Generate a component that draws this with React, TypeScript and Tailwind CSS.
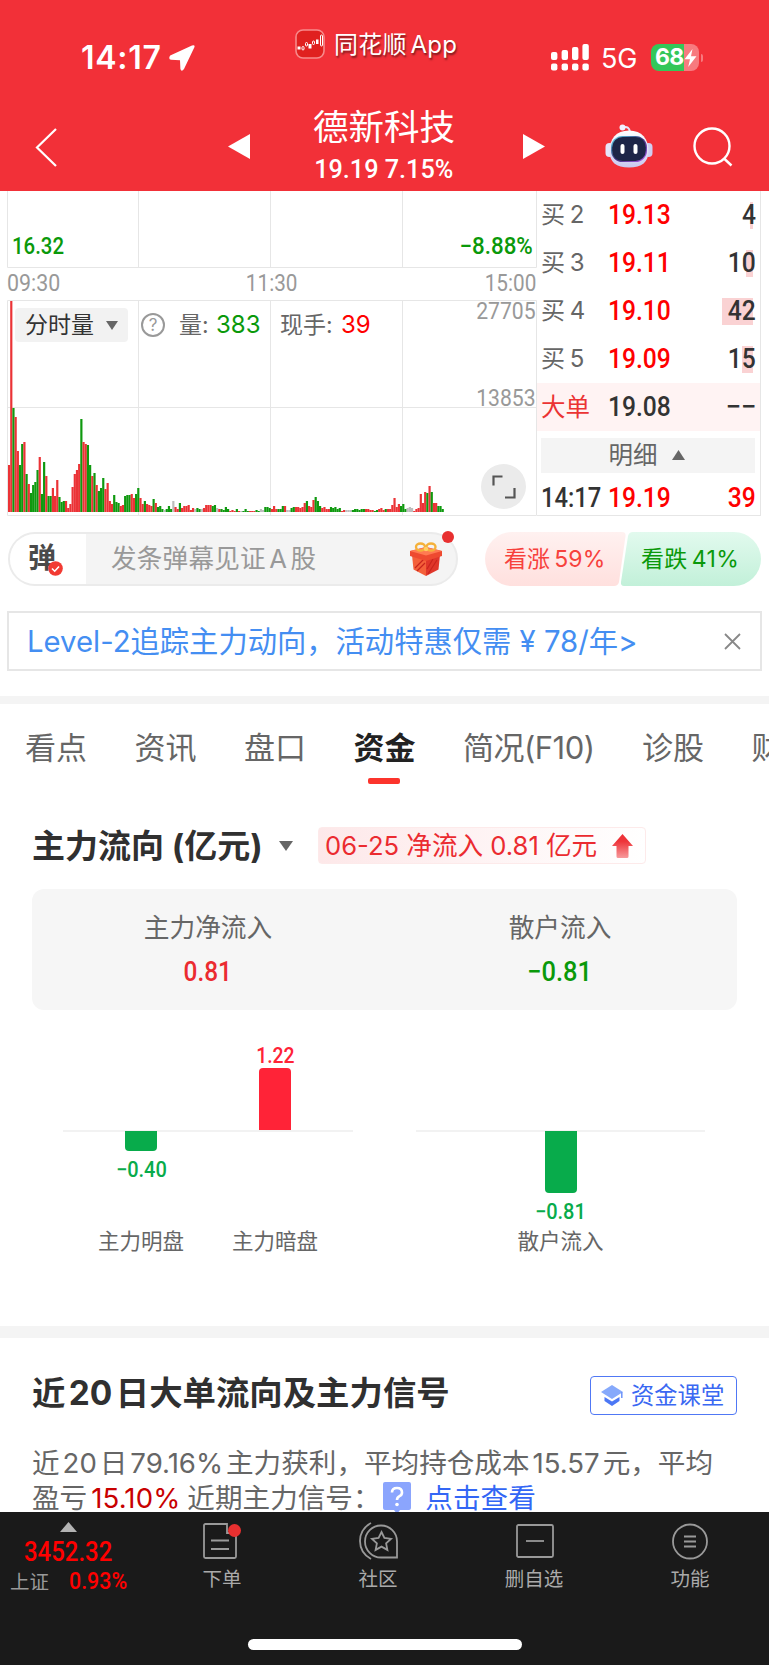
import { ReactNode } from "react";
import clsx from "clsx";

// one entry per minute: colour (r / g / n) + height in px
const volume =
  "r47 r211 g104 r95 r61 g47 g68 r70 g38 r28 g19 g27 g30 g42 r55 g18 g50 r36 g16 g16 r24 r16 r32 g15 g10 g11 r11 r4 r8 r25 r38 r42 r48 g93 r70 r68 g67 g47 r36 g39 r27 g21 g24 g34 r23 r29 r11 r8 g17 g10 g9 r6 r7 g16 g17 g17 r18 r14 g18 g24 " +
  "r14 r8 g11 r8 r7 r6 g13 r9 g5 g6 g3 n2 g3 g6 g3 n11 r5 r3 g9 r4 r6 r6 r7 r2 r4 n3 g4 g3 n3 r4 r7 r7 r7 g6 g7 n4 r3 g3 g2 g5 g3 r1 r2 r1 g3 r1 n1 g1 g3 g1 r1 r1 r1 g2 g1 n3 n2 g5 g5 g4 " +
  "r3 r6 r3 g3 g3 g6 r6 n2 n2 g4 g5 r5 r5 r4 r5 r9 g11 r6 r5 r12 g15 g11 g6 r4 r5 r3 r3 g5 g4 g5 g3 g4 r1 r2 n2 n2 n2 g2 g3 g3 g2 g3 g3 r3 r3 r2 r2 g1 g2 r3 r4 r2 g3 r3 r3 r7 r14 r5 r8 g6 g8 g3 n4 n5 n4 r1 r3 r4 r18 r9 r20 g19 r26 g20 r9 r9 g6 g6 g3";

const fills: Record<string, string> = { r: "#eb3336", g: "#0f990f", n: "#bdbdbd" };

const bids = [
  { name: "买 2", price: "19.13", qty: "4", bar: "w-[3px]" },
  { name: "买 3", price: "19.11", qty: "10", bar: "w-[7px]" },
  { name: "买 4", price: "19.10", qty: "42", bar: "w-[31px]" },
  { name: "买 5", price: "19.09", qty: "15", bar: "w-[11px]" },
];

const tabs = ["看点", "资讯", "盘口", "资金", "简况(F10)", "诊股", "财务"];

function Num({ children, className }: { children: ReactNode; className?: string }) {
  return (
    <span
      className={clsx("inline-block whitespace-nowrap font-[Roboto] font-medium", className)}
    >
      {children}
    </span>
  );
}

function StatusBar() {
  return (
    <div className="flex h-[100px] items-start text-white">
      <div className="ml-[81px] mt-[41px] flex w-[214px] items-center">
        <span className="text-[32px] font-semibold leading-[33px] tracking-[.7px]">14:17</span>
        <svg className="ml-[7px]" width="26" height="26" viewBox="0 0 26 26">
          <path d="M25.500 2Q26 -.5 23 .6L1.200 10.500Q-1 13.800 2 14.800L11 15.200 11.400 24Q12.500 27.500 15 24Z" fill="#fff" />
        </svg>
      </div>
      <div className="mt-[29px] flex h-[30px] w-[256px] items-center">
        <svg width="30" height="30" viewBox="0 0 30 30">
          <rect x="1" y="1" width="28" height="28" rx="7" fill="#e0211f" stroke="#f78a8b" strokeWidth="1.6" />
          <g fill="#fff">
            <rect x="2.5" y="17.5" width="3" height="3" />
            <rect x="13.5" y="15" width="3" height="4.5" />
            <rect x="21" y="10.5" width="2.5" height="4.5" />
          </g>
          <g fill="none" stroke="#fff" strokeWidth="1">
            <rect x="7" y="17.5" width="2" height="3.5" rx="1" />
            <rect x="10.5" y="13.5" width="2" height="3.5" rx="1" />
            <rect x="17.5" y="12" width="2" height="3.5" rx="1" />
            <rect x="25.5" y="6" width="2" height="11" rx="1" />
          </g>
        </svg>
        <span className="ml-[9px] mt-[2px] whitespace-nowrap text-[24px] leading-[30px] tracking-[0.2px] [text-shadow:1px_2px_2px_rgba(0,0,0,.5)] [word-spacing:-3px]">
          同花顺 App
        </span>
      </div>
      <svg className="mt-[44px]" width="39" height="27" viewBox="0 0 39 27">
        <g fill="#fff">
          <rect x="0" y="8" width="6.4" height="8" rx="2" />
          <rect x="10.6" y="6" width="6.4" height="10" rx="2" />
          <rect x="21" y="3" width="6.4" height="13" rx="2" />
          <rect x="31.4" y="0" width="6.4" height="16" rx="2" />
          <rect x="0" y="19.6" width="6.4" height="7" rx="2" />
          <rect x="10.6" y="19.6" width="6.4" height="7" rx="2" />
          <rect x="21" y="19.6" width="6.4" height="7" rx="2" />
          <rect x="31.4" y="19.6" width="6.4" height="7" rx="2" />
        </g>
      </svg>
      <span className="ml-[11px] mt-[44px] w-[50px] text-[27px] leading-[30px] tracking-[-0.2px]">5G</span>
      <div className="mt-[44px] flex items-center">
        <div className="flex h-[27px] w-[48px] items-center overflow-hidden rounded-[8px] bg-gradient-to-r from-[#34c759] from-[68%] to-[#f77a7f] to-[68%]">
          <span className="ml-[4px] text-[23px] font-bold leading-[27px] tracking-[-0.6px]">68</span>
          <svg width="13" height="18" viewBox="0 0 13 18">
            <path d="M8.5 0L.5 10.2H6L4.200 18 12.500 7.300H7z" fill="#fff" />
          </svg>
        </div>
        <div className="ml-[2px] h-[8px] w-[2px] rounded-r bg-[#f77a7f]" />
      </div>
    </div>
  );
}

function Robot() {
  return (
    <svg width="48" height="44" viewBox="0 0 48 44">
      <defs>
        <linearGradient id="head" x1="0" y1="0" x2="0" y2="1">
          <stop offset="0" stopColor="#ffffff" />
          <stop offset="1" stopColor="#c9c8f0" />
        </linearGradient>
        <linearGradient id="rim" x1="0" y1="0" x2="1" y2="1">
          <stop offset="0" stopColor="#62e0f0" />
          <stop offset=".5" stopColor="#3a2f78" />
          <stop offset="1" stopColor="#b05cf0" />
        </linearGradient>
      </defs>
      <path d="M18 3.500Q24 1.500 25 8" fill="none" stroke="#e6e4fa" strokeWidth="2" />
      <circle cx="17.500" cy="3.500" r="3" fill="#f2f0ff" />
      <rect x=".5" y="19" width="8" height="14" rx="4" fill="#e6e5fa" />
      <rect x="39.500" y="19" width="8" height="14" rx="4" fill="#d0cef2" />
      <path d="M24 6.500C37 6.500 43.500 15 43.500 27 43.500 38 37 43.500 24 43.500S4.500 38 4.500 27C4.500 15 11 6.500 24 6.500" fill="url(#head)" />
      <rect x="6" y="12" width="36" height="26" rx="11.500" fill="url(#rim)" />
      <rect x="7.200" y="13" width="33.600" height="24" rx="10.500" fill="#1d2547" />
      <rect x="15.500" y="20" width="4" height="10" rx="2" fill="#fff" />
      <rect x="28.500" y="20" width="4" height="10" rx="2" fill="#fff" />
    </svg>
  );
}

function Header() {
  return (
    <header className="h-[191px] overflow-hidden bg-[#f23038]">
      <StatusBar />
      <div className="flex h-[91px] items-start text-white">
        <svg className="ml-[35px] mt-[28px]" width="22" height="39" viewBox="0 0 22 39">
          <path d="M21 1L2 19.500 21 38" fill="none" stroke="#fff" strokeWidth="2.200" />
        </svg>
        <svg className="ml-[171px] mt-[34px]" width="22" height="25" viewBox="0 0 22 25">
          <path d="M22 0v25L0 12.500z" fill="#fff" />
        </svg>
        <div className="ml-[34px] w-[200px]">
          <div className="mt-[8px] w-full text-center text-[35.500px] leading-[40px]">德新科技</div>
          <div className="mt-[8px] text-center">
            <Num className="scale-x-[.97] text-[26px] leading-[26px]">19.19 7.15%</Num>
          </div>
        </div>
        <svg className="ml-[39px] mt-[34px]" width="22" height="25" viewBox="0 0 22 25">
          <path d="M0 0v25L22 12.500z" fill="#fff" />
        </svg>
        <div className="ml-[60px] mt-[24px]">
          <Robot />
        </div>
        <svg className="ml-[40px] mt-[27px]" width="41" height="40" viewBox="0 0 41 40">
          <g fill="none" stroke="#fff" strokeWidth="2.400">
            <circle cx="19" cy="19" r="17.500" />
            <path d="M31 31.500L38.500 38.500" />
          </g>
        </svg>
      </div>
    </header>
  );
}

function TimeChart() {
  return (
    <div className="relative w-[530px] shrink-0">
      <svg className="block" width="530" height="326" viewBox="7 191 530 326">
        <g stroke="#e6e6e6" strokeWidth="1" fill="none">
          <path d="M7.500 190V267.500H536.500V190M138.500 190V267M270.500 190V267M402.500 190V267" />
          <path d="M7.500 300.500H536.500V515.500H7.500zM7.500 407.500H536M138.500 300V515M270.500 300V515M402.500 300V515" />
        </g>
        {volume.split(" ").map((v, i) => (
          <rect
            key={i}
            x={8 + i * 2.19}
            y={512 - Number(v.slice(1))}
            width={2.19}
            height={v.slice(1)}
            fill={fills[v[0]]}
          />
        ))}
      </svg>

      {/* labels drawn over the grid */}
      <div className="absolute inset-0">
        <div className="flex justify-between pl-[5px] pr-[4px] pt-[41px] text-[#0a990a]">
          <Num className="origin-left scale-x-[.85] text-[24px] leading-[28px]">16.32</Num>
          <Num className="origin-right scale-x-[.93] text-[24px] leading-[28px]">−8.88%</Num>
        </div>
        <div className="mt-[10px] flex h-[28px] justify-between pr-px text-[#999]">
          <Num className="w-[60px] origin-left scale-x-[.93] text-[23px] font-normal leading-[28px]">09:30</Num>
          <Num className="mr-[3px] scale-x-[.9] text-[23px] font-normal leading-[28px]">11:30</Num>
          <Num className="origin-right scale-x-[.9] text-[23px] font-normal leading-[28px]">15:00</Num>
        </div>
        <div className="flex h-[86px] items-start pl-[8px] pt-[10px] text-[23px] leading-[34px] text-[#666]">
          <div className="flex h-[34px] w-[113px] items-center rounded-[4px] bg-[#f2f2f2] pl-[10px] text-[#333]">
            分时量
            <svg className="ml-[12px]" width="12" height="9" viewBox="0 0 12 9">
              <path d="M0 0h12L6 9z" fill="#666" />
            </svg>
          </div>
          <div className="ml-[13px] mt-[5px] flex size-[24px] items-center justify-center rounded-full border-2 border-[#999] text-[17px] text-[#999]">
            ?
          </div>
          <span className="ml-[14px] w-[37px]">量:</span>
          <span className="w-[64px] text-[24px] text-[#0a990a]">383</span>
          <span className="w-[61px]">现手:</span>
          <span className="text-[24px] text-[#f00]">39</span>
          <Num className="ml-auto mr-[1px] mt-[-10px] origin-right scale-x-[.92] text-[23px] font-normal leading-[28px] text-[#999]">
            27705
          </Num>
        </div>
        <div className="flex h-[50px] justify-end pr-[1px] text-[#999]">
          <Num className="mt-px origin-right scale-x-[.92] text-[23px] font-normal leading-[28px]">13853</Num>
        </div>
        <div className="ml-auto mr-[11px] mt-[30px] flex size-[45px] items-center justify-center rounded-full bg-[#ebebeb]">
          <svg width="24" height="24" viewBox="0 0 24 24">
            <path d="M1.500 10.500v-9h9M13 22.500h9.500v-9.500" fill="none" stroke="#555" strokeWidth="2.200" />
          </svg>
        </div>
      </div>
    </div>
  );
}

function OrderBook() {
  return (
    <div className="w-[224px] border-b border-r border-[#e6e6e6]">
      {bids.map((b) => (
        <div key={b.name} className="flex h-[48px] items-center pl-[4px]">
          <span className="w-[67px] whitespace-pre text-[24px] leading-[28px] text-[#666] [word-spacing:-2px]">{b.name}</span>
          <Num className="w-[80px] origin-left scale-x-[.88] text-[28px] leading-[30px] text-[#f00]">{b.price}</Num>
          <div className="relative flex h-[27px] flex-1 items-center justify-end pr-[4px]">
            <div className={clsx("absolute right-[7px] top-0 h-[27px] bg-[#fad2d3]", b.bar)} />
            <Num className="relative origin-right scale-x-[.88] text-[28px] leading-[30px] text-[#333]">{b.qty}</Num>
          </div>
        </div>
      ))}
      <div className="flex h-[48px] items-center bg-[#fff3f3] pl-[4px]">
        <span className="w-[67px] text-[24.500px] leading-[28px] text-[#eb3333]">大单</span>
        <Num className="origin-left scale-x-[.88] text-[28px] leading-[30px] text-[#333]">19.08</Num>
        <Num className="ml-auto mr-[4px] origin-right scale-x-[.98] text-[28px] leading-[30px] text-[#333]">−−</Num>
      </div>
      <div className="ml-[4px] mr-[5px] mt-[7px] flex h-[35px] items-center justify-center bg-[#f4f4f4] pr-[3px] text-[24.500px] leading-[33px] text-[#666]">
        明细
        <svg className="mb-[2px] ml-[14px]" width="13" height="10" viewBox="0 0 13 10">
          <path d="M0 10h13L6.500 0z" fill="#666" />
        </svg>
      </div>
      <div className="flex h-[49px] items-center pl-[4px]">
        <Num className="w-[67px] origin-left scale-x-[.85] text-[28px] leading-[30px] text-[#333]">14:17</Num>
        <Num className="origin-left scale-x-[.88] text-[28px] leading-[30px] text-[#f00]">19.19</Num>
        <Num className="ml-auto mr-[4px] origin-right scale-x-[.88] text-[28px] leading-[30px] text-[#f00]">39</Num>
      </div>
    </div>
  );
}

function Gift() {
  return (
    <svg width="34" height="34" viewBox="0 0 34 34">
      <path d="M3 13L17 17.500V34L4.500 27.500z" fill="#f4603a" />
      <path d="M31 13L17 17.500V34L29.500 27.500z" fill="#e0362a" />
      <path d="M6 26l9-9M8 29l8-8M19 32l9-14M18 27l6-10" stroke="#c9241d" strokeWidth="1.200" />
      <path d="M1 9L17 5 33 9V14L17 19 1 14z" fill="#ee4a30" />
      <path d="M1 9L17 5 33 9 17 13.500z" fill="#ff7a52" />
      <g fill="none" stroke="#f5b13a" strokeWidth="2.400">
        <ellipse cx="11.500" cy="5" rx="4.500" ry="3.500" />
        <ellipse cx="22" cy="5" rx="4.500" ry="3.500" />
      </g>
      <circle cx="17" cy="7" r="2.200" fill="#ffcf63" />
    </svg>
  );
}

function DanmuBar() {
  return (
    <div className="flex h-[54px] pl-[8px]">
      <div className="relative h-[54px] w-[450px]">
        <div className="flex h-full items-center overflow-hidden rounded-full border-2 border-[#ebebeb] bg-[#f4f4f4]">
          <div className="flex h-full w-[76px] items-center bg-white pl-[18px]">
            <div className="relative mb-[3px] text-[28px] font-bold leading-[32px] text-[#4a4a4a]">
              弹
              <svg className="absolute -bottom-[2px] left-[20px]" width="15" height="15" viewBox="0 0 15 15">
                <circle cx="7.500" cy="7.500" r="7.300" fill="#f23a32" />
                <path d="M4 7.500l2.700 2.700L11 5.500" fill="none" stroke="#fff" strokeWidth="1.600" />
              </svg>
            </div>
          </div>
          <span className="ml-[25px] text-[25.600px] tracking-[.2px] text-[#999] [word-spacing:-4px]">发条弹幕见证 A 股</span>
          <div className="ml-auto mr-[13px]">
            <Gift />
          </div>
        </div>
        <div className="absolute -top-[1px] right-[4px] size-[12px] rounded-full bg-[#e83030]" />
      </div>

      <div className="relative ml-[27px] flex w-[276px] text-[23px] leading-[54px]">
        <svg className="absolute inset-0" width="276" height="54" viewBox="0 0 276 54">
          <defs>
            <linearGradient id="up" x1="0" y1="0" x2="0" y2="1">
              <stop offset="0" stopColor="#fff1f0" />
              <stop offset="1" stopColor="#ffe0de" />
            </linearGradient>
            <linearGradient id="down" x1="0" y1="0" x2="0" y2="1">
              <stop offset="0" stopColor="#e2faee" />
              <stop offset="1" stopColor="#c2f0d9" />
            </linearGradient>
          </defs>
          <path d="M27 0H137Q141 0 140.500 4L134 50Q133 54 129 54H27A27 27 0 0 1 27 0" fill="url(#up)" />
          <path d="M148 0H249A27 27 0 0 1 249 54H139Q135.500 54 136 50L143 4Q144 0 148 0" fill="url(#down)" />
        </svg>
        <span className="relative ml-[19px] w-[137px] tracking-[.1px] text-[#f7413c] [word-spacing:-2.500px]">看涨 59%</span>
        <span className="relative tracking-[.3px] text-[#0a990a] [word-spacing:-2.500px]">看跌 41%</span>
      </div>
    </div>
  );
}

function Tabs() {
  return (
    <nav className="flex h-[105px] gap-[47.500px] overflow-hidden pl-[25px] pt-[26px] text-[31px] leading-[36px] text-[#666]">
      {tabs.map((t) => (
        <div
          key={t}
          className={clsx(
            "flex shrink-0 flex-col items-center",
            t === "资金" && "font-bold text-[#222]",
            t.includes("F10") && "tracking-[-.5px]"
          )}
        >
          <span className="whitespace-nowrap">{t}</span>
          {t === "资金" && <div className="mr-px mt-[12px] h-[6px] w-[32px] rounded-[2px] bg-[#fc342c]" />}
        </div>
      ))}
    </nav>
  );
}

function FlowSection() {
  return (
    <section className="px-[32px]">
      <div className="mt-[18px] flex h-[37px] items-center">
        <h2 className="mt-[2px] w-[247px] whitespace-nowrap text-[33px] font-bold leading-[37px] text-[#303030]">主力流向 (亿元)</h2>
        <svg width="14" height="10" viewBox="0 0 14 10">
          <path d="M0 0h14L7 10z" fill="#666" />
        </svg>
        <div className="ml-[25px] flex h-[37px] w-[328px] items-center rounded-[4px] border border-[#fdeaea] bg-gradient-to-r from-[#fde8e9] to-white pl-[6px] text-[25.600px] text-[#eb2b30]">
          <span className="w-[287px] whitespace-nowrap leading-[34px]">06-25 净流入 0.81 亿元</span>
          <svg width="21" height="24" viewBox="0 0 21 24">
            <defs>
              <linearGradient id="arrow" x1="0" y1="0" x2="0" y2="1">
                <stop offset=".3" stopColor="#ee3339" />
                <stop offset="1" stopColor="#f79a9c" />
              </linearGradient>
            </defs>
            <path d="M10.500 0L21 12H16.500V22.500Q16.500 24 15 24H6Q4.500 24 4.500 22.500V12H0z" fill="url(#arrow)" />
          </svg>
        </div>
      </div>

      <div className="mt-[25px] grid h-[121px] grid-cols-2 rounded-[12px] bg-[#f6f6f6] pr-[1px] text-center">
        <div>
          <div className="mt-[21px] text-[25.700px] leading-[36px] text-[#666]">主力净流入</div>
          <Num className="mt-[11px] scale-x-[.87] text-[28px] leading-[30px] text-[#eb2b30]">0.81</Num>
        </div>
        <div>
          <div className="mt-[21px] text-[25.700px] leading-[36px] text-[#666]">散户流入</div>
          <Num className="mt-[11px] scale-x-[.91] text-[28px] leading-[30px] text-[#0a990a]">−0.81</Num>
        </div>
      </div>

      <div className="flex h-[316px] gap-[63px] pl-[30px] pt-[31px]">
        <Bars
          items={[
            { label: "主力明盘", value: "−0.40", size: "h-[20px]", up: false },
            { label: "主力暗盘", value: "1.22", size: "h-[62px]", up: true },
          ]}
        />
        <Bars items={[{ label: "散户流入", value: "−0.81", size: "h-[62px]", up: false }]} />
      </div>
    </section>
  );
}

type Bar = { label: string; value: string; size: string; up: boolean };

function Bars({ items }: { items: Bar[] }) {
  return (
    <div className={clsx("w-[291px]", items.length > 1 ? "pl-px" : "pr-[2px]")}>
      <div className="flex h-[91px] items-end justify-center border-b-2 border-[#f2f2f2]">
        {items.map((b) => (
          <div key={b.label} className="flex w-[134px] flex-col items-center">
            {b.up && (
              <>
                <Num className="scale-x-[.9] text-[21.500px] leading-[24px] text-[#ff2337]">{b.value}</Num>
                <div className={clsx("w-[32px] rounded-t-[4px] bg-[#ff2337]", b.size)} />
              </>
            )}
          </div>
        ))}
      </div>
      <div className="-mt-px flex h-[96px] justify-center">
        {items.map((b) => (
          <div key={b.label} className="flex w-[134px] flex-col items-center">
            {!b.up && (
              <>
                <div className={clsx("w-[32px] rounded-b-[4px] bg-[#08ab4b]", b.size)} />
                <Num className="mt-[6px] scale-x-[.93] text-[21.500px] leading-[25px] text-[#08ab4b]">{b.value}</Num>
              </>
            )}
          </div>
        ))}
      </div>
      <div className="flex justify-center text-[21.500px] leading-[28px] text-[#666]">
        {items.map((b) => (
          <span key={b.label} className="w-[134px] text-center">
            {b.label}
          </span>
        ))}
      </div>
    </div>
  );
}

function SignalSection() {
  return (
    <section className="h-[174px] overflow-hidden px-[32px] pt-[36px]">
      <div className="flex items-center justify-between">
        <h2 className="mb-[4px] whitespace-nowrap text-[33.400px] font-bold leading-[39px] text-[#303030] [word-spacing:-4.500px]">
          近 20 日大单流向及主力信号
        </h2>
        <div className="flex h-[39px] w-[147px] items-center rounded-[4px] border-[1.500px] border-[#5078f5] pl-[10px] text-[23.300px] text-[#3a68f2]">
          <svg width="22" height="21" viewBox="0 0 22 21">
            <path d="M11 0L22 7 11 14 0 7z" fill="#86a9fb" />
            <path d="M3.500 12L11 16.500 18.500 12V16L11 21 3.500 16z" fill="#4b77f5" />
            <path d="M20.800 7v6" stroke="#6d93fa" strokeWidth="1.500" />
          </svg>
          <span className="ml-[8px] mt-px whitespace-nowrap leading-[34px]">资金课堂</span>
        </div>
      </div>
      <div className="mt-[29px] whitespace-nowrap text-[27.600px] leading-[35px] text-[#666]">
        <div className="[word-spacing:-4.800px]">近 20 日 79.16% 主力获利，平均持仓成本 15.57 元，平均</div>
        <div className="flex">
          <span>盈亏</span>
          <span className="ml-[4px] tracking-[.1px] text-[#c80000]">15.10%</span>
          <span className="ml-[7px] w-[196px]">近期主力信号：</span>
          <svg className="mt-[1px]" width="28" height="32" viewBox="0 0 28 32">
            <path d="M2 0H26Q28 0 28 2V26Q28 28 26 28H17L14 32 11 28H2Q0 28 0 26V2Q0 0 2 0" fill="#8ba5fd" />
            <path d="M9 10.500Q9 6 14 6T19 10.500Q19 13 16.500 14.200Q14 15.500 14 18" fill="none" stroke="#fff" strokeWidth="2.600" />
            <circle cx="14" cy="22.500" r="1.800" fill="#fff" />
          </svg>
          <span className="ml-[14px] text-[#3366f5]">点击查看</span>
        </div>
      </div>
    </section>
  );
}

function NavItem({ label, children }: { label: string; children: ReactNode }) {
  return (
    <div className="flex w-[156px] shrink-0 flex-col items-center">
      <svg width="40" height="38" viewBox="0 0 40 38" fill="none" stroke="#999" strokeWidth="1.800">
        {children}
      </svg>
      <span className="mt-[6px] text-[19.500px] leading-[26px] text-[#aaa]">{label}</span>
    </div>
  );
}

function BottomBar() {
  return (
    <footer className="h-[153px] overflow-hidden bg-[#1a1a1a]">
      <div className="flex h-[127px] pt-[10px]">
        <div className="flex w-[144px] shrink-0 flex-col">
          <svg className="ml-[60px]" width="17" height="10" viewBox="0 0 17 10">
            <path d="M0 10h17L8.500 0z" fill="#b3b3b3" />
          </svg>
          <Num className="ml-[24px] mt-[5px] origin-left scale-x-[.87] text-[27.500px] leading-[30px] text-[#f00]">3452.32</Num>
          <div className="flex h-[30px] items-center">
            <span className="ml-[10px] w-[59px] text-[19.500px] leading-[26px] text-[#999]">上证</span>
            <Num className="origin-left scale-x-[.93] text-[23px] leading-[26px] text-[#f00]">0.93%</Num>
          </div>
        </div>
        <div className="relative">
          <NavItem label="下单">
            <path d="M25 2H3.500Q2 2 2 3.500V34.500Q2 36 3.500 36H32.500Q34 36 34 34.500V11H25zM9 18.500H27M9 27H27" />
          </NavItem>
          <div className="absolute left-[84px] top-[2px] size-[13px] rounded-full bg-[#e83030]" />
        </div>
        <NavItem label="社区">
          <path d="M39 35.500H23A16 16 0 1 1 39 19.500z" />
          <path d="M13 1Q2 7 2 19T13 37" />
          <path d="M23.500 10l2.900 6 6.600.8-4.900 4.500 1.300 6.600-5.900-3.300-5.900 3.300 1.300-6.600-4.900-4.500 6.600-.8z" />
        </NavItem>
        <NavItem label="删自选">
          <rect x="3" y="3" width="36" height="32" rx="1.500" />
          <path d="M12 19H30" />
        </NavItem>
        <NavItem label="功能">
          <circle cx="20" cy="19.500" r="17" />
          <path d="M14 14.500H26M14 19.500H26M14 24.500H26" />
        </NavItem>
      </div>
      <div className="mx-auto h-[11px] w-[274px] rounded-full bg-white" />
    </footer>
  );
}

export default function App() {
  return (
    <div className="flex h-[1665px] w-[769px] flex-col overflow-hidden bg-white font-[Inter,'Noto_Sans_CJK_SC',sans-serif]">
      <Header />
      <div className="flex h-[325px] shrink-0 pl-[7px]">
        <TimeChart />
        <OrderBook />
      </div>
      <div className="mt-[16px]">
        <DanmuBar />
      </div>
      <div className="mx-[7px] mt-[25px] flex h-[60px] shrink-0 items-center justify-between border-2 border-[#e6e6e6] pl-[18px] pr-[19px]">
        <span className="mt-[2px] whitespace-nowrap text-[29.300px] leading-[40px] text-[#448ef2]">
          Level-2追踪主力动向，活动特惠仅需 ¥ 78/年&gt;
        </span>
        <svg width="17" height="17" viewBox="0 0 17 17">
          <path d="M1 1l15 15M16 1L1 16" stroke="#888" strokeWidth="1.800" />
        </svg>
      </div>
      <div className="mt-[25px] h-[8px] shrink-0 bg-[#f4f4f4]" />
      <Tabs />
      <FlowSection />
      <div className="h-[12px] shrink-0 bg-[#f4f4f4]" />
      <SignalSection />
      <BottomBar />
    </div>
  );
}
